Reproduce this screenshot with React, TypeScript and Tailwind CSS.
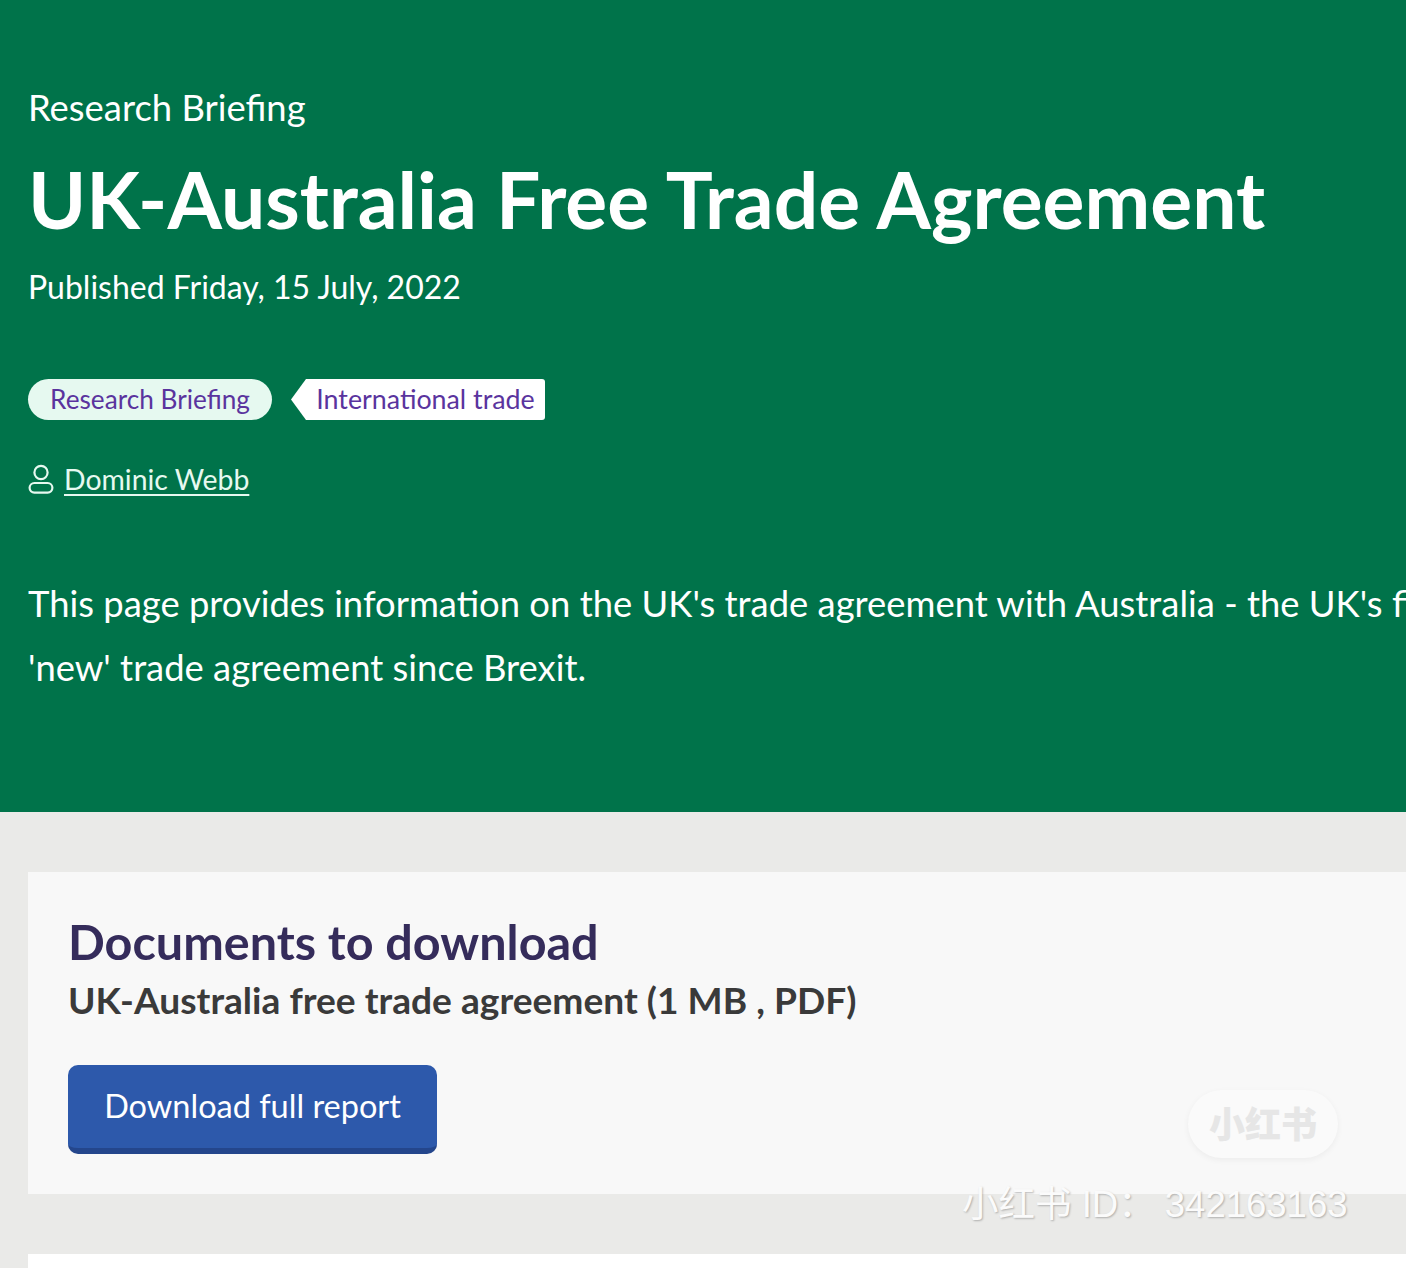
const App = () => {
  return (
    <div className="h-[1268px] w-[1406px] overflow-hidden bg-[#eaeae8] font-['Lato',sans-serif] relative">
      {/* Hero */}
      <header className="h-[812px] bg-[#00734a] pl-[28px] pt-[85px] text-white">
        <p className="text-[36.4px] leading-[44px]">Research Briefing</p>
        <h1 className="mt-[25px] whitespace-nowrap text-[78.5px] font-bold leading-[90px]">
          UK-Australia Free Trade Agreement
        </h1>
        <p className="mt-[23px] text-[32px] leading-[40px]">Published Friday, 15 July, 2022</p>

        <div className="mt-[72px] flex items-center">
          <span className="flex h-[41px] w-[244px] items-center justify-center rounded-full bg-[#e6f9f0] text-[26.2px] text-[#5a349e]">
            Research Briefing
          </span>
          <span className="ml-[19px] flex h-[41px] items-center">
            <span className="h-[41px] w-[15px] bg-white [clip-path:polygon(100%_0,0_50%,100%_100%)]" />
            <span className="flex h-[41px] w-[239px] items-center justify-center rounded-r-[3px] bg-white text-[26.8px] text-[#5a349e]">
              International trade
            </span>
          </span>
        </div>

        <div className="mt-[39px] flex h-[40px] items-center gap-[10px]">
          <svg width="26" height="30" viewBox="0 0 26 30" fill="none" stroke="#e6f9f0" strokeWidth="2.2">
            <circle cx="13" cy="8.5" r="6.6" />
            <rect x="1.6" y="19" width="22.8" height="9.6" rx="4.8" />
          </svg>
          <a href="#" className="text-[28.4px] text-[#e6f9f0] underline underline-offset-[4px]">
            Dominic Webb
          </a>
        </div>

        <p className="mt-[72px] w-[1500px] text-[36.4px] leading-[64px]">
          This page provides information on the UK's trade agreement with Australia - the UK's first
          <br />
          'new' trade agreement since Brexit.
        </p>
      </header>

      {/* Documents */}
      <main className="pl-[28px] pt-[60px]">
        <section className="h-[322px] w-[1500px] bg-[#f8f8f8] pl-[40px] pt-[40px]">
          <h2 className="text-[48.5px] font-bold leading-[58px] text-[#352c5b]">Documents to download</h2>
          <h3 className="mt-[8px] text-[37.15px] font-bold leading-[44px] text-[#3a3a3a]">
            UK-Australia free trade agreement (1 MB , PDF)
          </h3>
          <button className="mt-[43px] flex h-[89px] w-[369px] items-center justify-center rounded-[10px] border-b-[6px] border-[#24468c] bg-[#2d59ab] text-[32.5px] text-white">
            Download full report
          </button>
        </section>
        <section className="mt-[60px] h-[200px] w-[1500px] bg-white" />
      </main>

      {/* Watermark */}
      <div className="absolute left-[1188px] top-[1090px] flex h-[68px] w-[150px] items-center justify-center rounded-full bg-[#fafafa] pb-[5px] shadow-[0_2px_6px_rgba(0,0,0,0.05)]">
        <span className="font-['Noto_Sans_CJK_SC',sans-serif] text-[36px] font-black leading-none text-[#e6e6e6]">小红书</span>
      </div>
      <div className="absolute left-[962px] top-[1180px] whitespace-nowrap font-['Liberation_Sans','Noto_Sans_CJK_SC',sans-serif] text-[36.5px] leading-[50px] text-[#fbfbfb] [text-shadow:1px_1px_2px_rgba(0,0,0,0.25)]">
        小红书 ID： 342163163
      </div>
    </div>
  );
};

export default App;
